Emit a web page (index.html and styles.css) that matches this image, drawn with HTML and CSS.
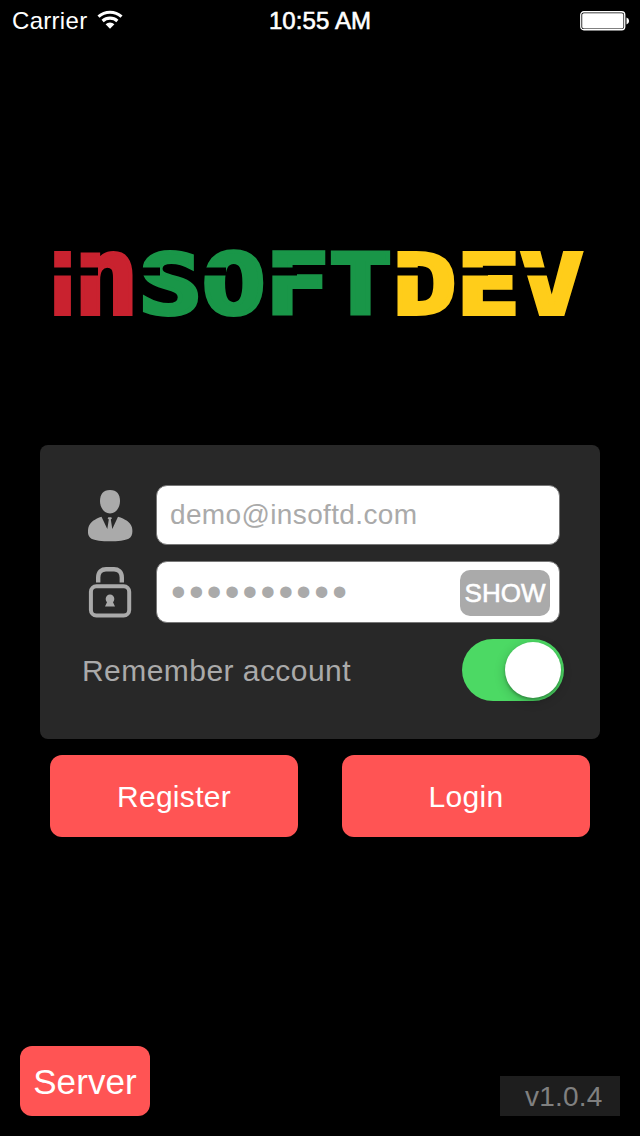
FILE: index.html
```html
<!DOCTYPE html>
<html lang="en">
<head>
<meta charset="utf-8">
<title>Insoftdev</title>
<link rel="stylesheet" href="styles.css">
</head>
<body>
<div class="screen">
  <header class="status">
    <div class="carrier">Carrier
      <svg class="wifi" width="26" height="20" viewBox="0 0 26 20">
        <path d="M1.500 6.700a17 17 0 0 1 23 0M5.600 11a11 11 0 0 1 14.800 0" fill="none" stroke="#fff" stroke-width="3.100"/>
        <path d="M8.600 14.200a6.400 6.400 0 0 1 8.800 0L13 18.700z" fill="#fff"/>
      </svg>
    </div>
    <div class="time">10:55 AM</div>
    <div class="power">
      <svg width="50" height="20" viewBox="0 0 50 20">
        <rect x=".75" y=".75" width="44" height="18" rx="3" fill="none" stroke="#fff" stroke-width="1.300"/>
        <rect x="2.200" y="2.200" width="41.200" height="15.200" rx="1.600" fill="#fff"/>
        <path d="M46.500 6.400q2.600.8 2.600 3.500t-2.600 3.500z" fill="#fff"/>
      </svg>
    </div>
  </header>

  <svg class="logo" width="540" height="80" viewBox="0 0 540 80" role="img" aria-label="INSOFTDEV">
    <text class="mark-i red" transform="translate(-4 73)">I</text>
    <text class="mark-n red" transform="translate(23.500 71)">n</text>
    <text class="mark green" transform="translate(88.500 71) scale(1.255 1)">SOFT</text>
    <text class="mark yellow" transform="translate(343 71) scale(1.255 1)">DEV</text>
    <g fill="#000">
      <rect x="2" y="24.500" width="20" height="8"/>
      <rect x="26" y="24.500" width="22" height="8"/>
      <rect x="90" y="24.500" width="20" height="8"/>
      <rect x="153" y="24.500" width="23" height="8"/>
      <rect x="217" y="24.500" width="30" height="8"/>
      <rect x="344" y="24.500" width="26" height="8"/>
      <rect x="408" y="24.500" width="30" height="8"/>
      <rect x="470" y="24.500" width="30" height="8"/>
    </g>
  </svg>

  <main class="card">
    <div class="row row-user">
      <svg class="icon" width="46" height="54" viewBox="0 0 46 54" fill="#aaa">
        <path d="M22 1C15 1 12 5.500 12 12s4 12.500 10 12.500S32 18.500 32 12 29 1 22 1z"/>
        <path d="M13.500 27.800C7 30 2 33 .4 38.500c-1 5-.6 9 3 11.200 6 3.400 31 3.400 37.200 0 3.600-2.200 4.400-6.200 3.400-11.200C42.400 33 37 30 30 27.800L24.300 40 22.800 30.500 24 29.300 23.200 28.200h-2.800l-.8 1.100 1.200 1.200L19.300 40z"/>
      </svg>
      <div class="field">demo@insoftd.com</div>
    </div>
    <div class="row row-pass">
      <svg class="icon" width="46" height="54" viewBox="0 0 46 54">
        <path d="M10.200 17.500V12.500C10.200 6.500 14 4.200 18 4.200h8c4 0 7.800 2.300 7.800 8.300v5" fill="none" stroke="#aaa" stroke-width="4.400"/>
        <rect x="2.900" y="21.200" width="38.300" height="29.300" rx="5.500" fill="none" stroke="#aaa" stroke-width="4"/>
        <path d="M22 29.500a4.300 4.300 0 0 0-4.300 4.300c0 1.500.5 2.600 1.300 3.400l-2 4.300h10l-2-4.300c.8-.8 1.300-1.900 1.300-3.400a4.300 4.300 0 0 0-4.300-4.300z" fill="#aaa"/>
      </svg>
      <div class="field field-pass"><span class="dots">••••••••••</span><button class="show">SHOW</button></div>
    </div>
    <div class="remember">
      <span class="label">Remember account</span>
      <div class="switch"><div class="knob"></div></div>
    </div>
  </main>

  <div class="actions">
    <button class="btn">Register</button>
    <button class="btn">Login</button>
  </div>

  <footer class="footer">
    <button class="btn server">Server</button>
    <div class="version">v1.0.4</div>
  </footer>
</div>
</body>
</html>
```

FILE: styles.css
```css
* { box-sizing: border-box; }
body { margin: 0; background: #000; }
button { border: 0; padding: 0; font: inherit; color: inherit; }
.screen {
  width: 640px; height: 1136px; background: #000; color: #fff;
  display: flex; flex-direction: column; overflow: hidden;
  font-family: "Liberation Sans", Arial, sans-serif;
}
.status {
  height: 40px; display: grid; grid-template-columns: 1fr auto 1fr;
  align-items: center; padding: 2px 10px 0 12px; font-size: 24px; line-height: 38px;
}
.carrier { display: flex; align-items: center; gap: 10px; letter-spacing: .3px; }
.wifi { margin-top: -3px; }
.time { -webkit-text-stroke: .6px #fff; margin-right: 2px; letter-spacing: .1px; }
.power { display: flex; justify-content: flex-end; }
.logo { margin: 203px 0 0 50px; display: block; flex: none; overflow: visible; }
.mark { font: bold 84px "DejaVu Sans Mono", monospace; stroke-width: 4px; }
.mark-i { font: bold 89px "DejaVu Sans", sans-serif; }
.mark-n { font: bold 109px "DejaVu Sans Mono", monospace; stroke-width: 4px; }
.red { fill: #c9222f; }
.mark-n.red { stroke: #c9222f; }
.green { fill: #199648; stroke: #199648; }
.yellow { fill: #ffcd1a; stroke: #ffcd1a; }
.card {
  margin: 122px 40px 0; height: 294px; flex: none;
  background: #282828; border-radius: 8px; padding: 40px 40px 0 48px;
  display: flex; flex-direction: column;
}
.row { display: flex; justify-content: space-between; align-items: center; }
.row-user { height: 60px; }
.row-pass { height: 62px; margin-top: 16px; }
.icon { flex: none; }
.row-user .icon { margin-top: 1px; }
.field {
  width: 404px; height: 60px; background: #fff; border: 1px solid #777;
  border-radius: 11px; padding: 0 9px 0 13px; display: flex; align-items: center;
  color: #aaa; font-size: 28px; letter-spacing: .36px;
}
.field-pass { height: 62px; justify-content: space-between; }
.dots { font-size: 42px; line-height: 60px; letter-spacing: 3.2px; padding-left: 1px; }
.show {
  width: 90px; height: 46px; border-radius: 10px; background: #aaa; color: #fff; margin-top: 2px;
  font-size: 26px; letter-spacing: 0; -webkit-text-stroke: .6px #fff;
}
.remember {
  display: flex; justify-content: space-between; align-items: center;
  height: 62px; margin: 16px -4px 0 -6px; color: #aaa; font-size: 30px; letter-spacing: .45px;
}
.label { padding-top: 2px; }
.switch {
  width: 102px; height: 62px; border-radius: 31px; background: #4cd964;
  padding: 3px; display: flex; justify-content: flex-end;
}
.knob { width: 56px; height: 56px; border-radius: 50%; background: #fff; box-shadow: 0 3px 12px rgba(0,0,0,.2), 0 2px 3px rgba(0,0,0,.25); }
.actions { display: flex; justify-content: space-between; padding: 16px 50px 0; }
.btn {
  width: 248px; height: 82px; border-radius: 12px; background: #ff5454;
  color: #fff; font-size: 30px; letter-spacing: .3px; padding-top: 2px;
}
.footer {
  margin-top: auto; padding: 0 20px 20px; display: flex;
  justify-content: space-between; align-items: flex-end;
}
.server { width: 130px; height: 70px; font-size: 35px; letter-spacing: .1px; }
.version {
  width: 120px; height: 40px; background: #1e1e1e; color: #808080;
  font-size: 28px; line-height: 41px; padding-left: 25px; letter-spacing: .2px;
}
```
